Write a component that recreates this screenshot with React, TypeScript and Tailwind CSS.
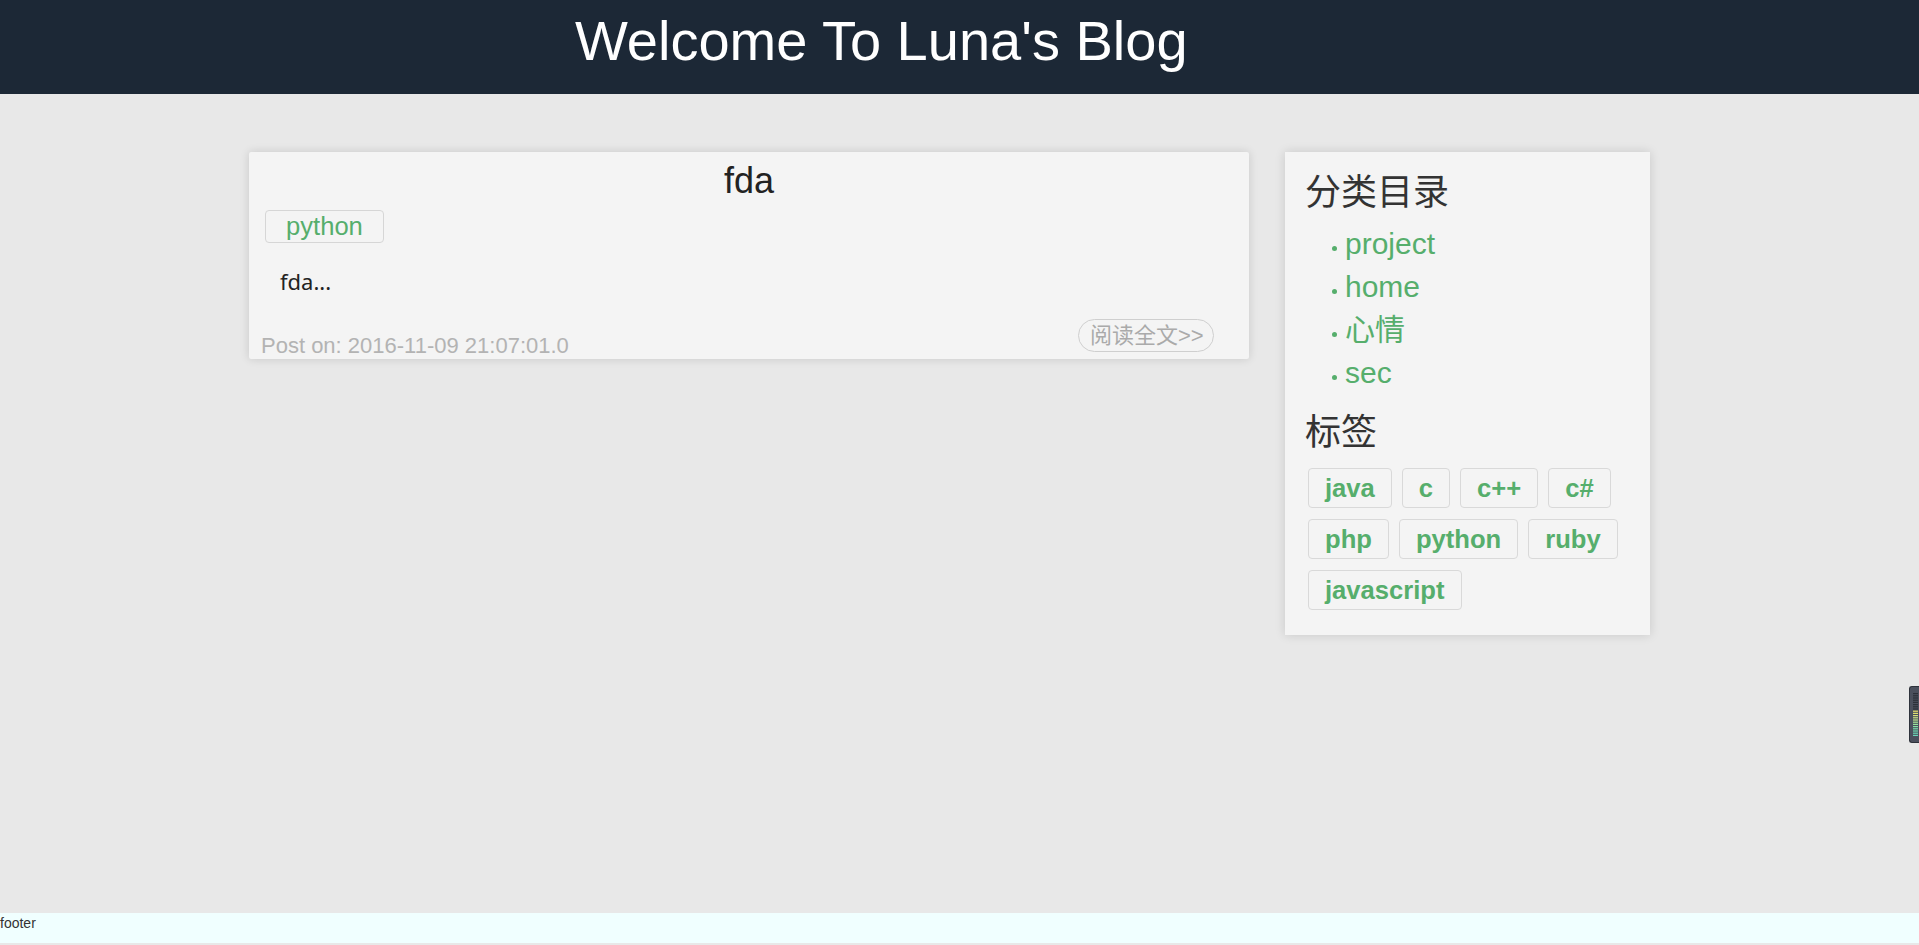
const categories = ["project", "home", "心情", "sec"]

const tags = ["java", "c", "c++", "c#", "php", "python", "ruby", "javascript"]

function MeterWidget() {
  // small extension overlay pinned to the right edge
  const bars = [
    "#2c3039", "#2c3039", "#2c3039", "#2c3039", "#2c3039", "#2c3039", "#2c3039", "#2c3039",
    "#e6df6a", "#e0e070", "#d6e27a", "#cbe483", "#bde58c", "#a9e594", "#98e49c", "#86e2a4", "#78dfab", "#6fdcb0", "#6ad8b4", "#68d6b8",
  ]
  return (
    <div className="absolute right-0 top-[686px] w-[10px] h-[57px] rounded-l-[3px] border border-r-0 border-[#2e323b] bg-[#4b505d]">
      <svg width="10" height="57" viewBox="0 0 10 57" className="block">
        {bars.map((c, i) => (
          <rect key={i} x="3" y={6 + i * 2.2} width="5" height="1.2" fill={c} />
        ))}
      </svg>
    </div>
  )
}

function Post() {
  return (
    <article className="w-[1000px] h-[207px] flex flex-col bg-[#f4f4f4] rounded-[2px] shadow-[0_0_10px_rgba(0,0,0,0.14)]">
      <h2 className="pt-[9px] text-center text-[36px] leading-[40px] text-[#222]">fda</h2>
      <div className="mt-[9px] pl-[16px]">
        <a className="inline-block h-[33px] px-[20px] border border-[#d6d6d6] rounded-[4px] text-[25.6px] leading-[31px] text-[#56ae6c]">
          python
        </a>
      </div>
      <p className="mt-[25px] pl-[31px] font-['Noto_Sans','Noto_Sans_CJK_SC',sans-serif] text-[22px] leading-[26px] text-[#222]">
        fda...
      </p>
      <div className="mt-auto flex items-end justify-between pl-[12px] pr-[35px] pb-[2px]">
        <span className="text-[22px] leading-[22px] text-[#b3b3b3]">Post on: 2016-11-09 21:07:01.0</span>
        <a className="mb-[5px] h-[33px] w-[136px] pl-[11px] border border-[#cfcfcf] rounded-full text-[22px] leading-[31px] text-[#aaaaaa]">
          阅读全文&gt;&gt;
        </a>
      </div>
    </article>
  )
}

function Sidebar() {
  return (
    <aside className="w-[365px] bg-[#f4f4f4] px-[20px] pt-[21px] pb-[25px] shadow-[0_0_10px_rgba(0,0,0,0.14)]">
      <h3 className="text-[36px] leading-[40px] text-[#333]">分类目录</h3>
      <ul className="mt-[9px] pl-[27px]">
        {categories.map((c) => (
          <li key={c} className="text-[30px] leading-[43px] text-[#56ae6c]">
            <span className="mr-[8px] inline-block w-[5px] h-[5px] rounded-full bg-[#56ae6c] align-[3px]" />
            <a>{c}</a>
          </li>
        ))}
      </ul>
      <h3 className="mt-[19px] text-[36px] leading-[40px] text-[#333]">标签</h3>
      <div className="mt-[15px] pl-[3px] flex flex-wrap gap-x-[10px] gap-y-[11px]">
        {tags.map((t) => (
          <a key={t} className="h-[40px] px-[16px] border border-[#d9d9d9] rounded-[4px] text-[25.6px] leading-[38px] font-bold text-[#56ae6c]">
            {t}
          </a>
        ))}
      </div>
    </aside>
  )
}

export default function App() {
  return (
    <div className="relative h-[945px] flex flex-col bg-[#e8e8e8] font-['Liberation_Sans','Noto_Sans_CJK_SC',sans-serif]">
      <header className="h-[94px] bg-[#1c2836] pl-[575px] pt-[13px]">
        <h1 className="text-[56px] leading-[56px] text-white">Welcome To Luna's Blog</h1>
      </header>

      <main className="flex-1 flex items-start gap-[36px] pl-[249px] pt-[58px]">
        <Post />
        <Sidebar />
      </main>

      <footer className="h-[30px] mb-[2px] bg-[#f0ffff] text-[14px] leading-[20px] text-[#333]">footer</footer>

      <MeterWidget />
    </div>
  )
}
